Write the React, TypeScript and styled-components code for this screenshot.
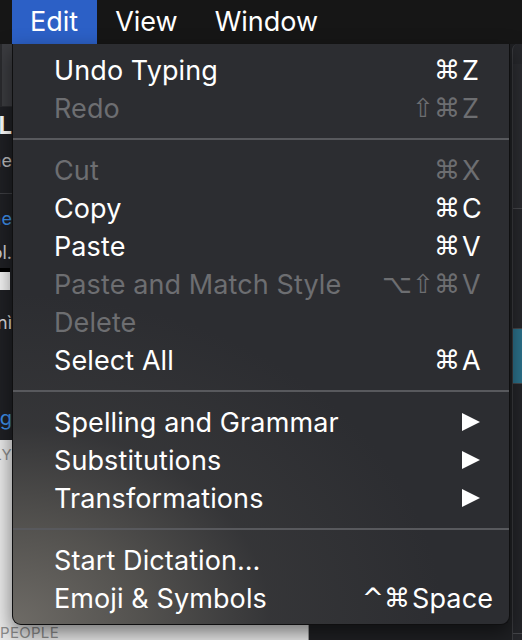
import React from "react";
import styled, { createGlobalStyle, css } from "styled-components";

const GlobalStyle = createGlobalStyle`
  html, body { margin: 0; padding: 0; background: #161616; }
  body { font-family: "Inter", "DejaVu Sans", sans-serif; -webkit-font-smoothing: antialiased; }
  * { box-sizing: border-box; }
`;

const Screen = styled.div`
  width: 522px;
  height: 640px;
  overflow: hidden;
  display: flex;
  flex-direction: column;
  background: #161616;
`;

const MenuBar = styled.div`
  height: 44px;
  flex: 0 0 44px;
  display: flex;
  align-items: stretch;
  padding-left: 12px;
  background: #161616;
`;

const MenuTitle = styled.div<{ $active?: boolean }>`
  display: flex;
  align-items: center;
  padding: 0 19px 2px 18px;
  font-size: 27px;
  color: #fff;
  ${(p) =>
    p.$active &&
    css`
      background: #2c60c6;
    `}
`;

const Desktop = styled.div`
  flex: 1;
  position: relative;
  display: flex;
`;

const LeftPane = styled.div`
  width: 309px;
  display: flex;
  flex-direction: column;
  border-right: 1px solid #9a9a9a;
`;

const DarkArea = styled.div`
  height: 396px;
  flex: 0 0 396px;
  display: flex;
  flex-direction: column;
  background: #1f2024;
`;

const Toolbar = styled.div`
  height: 63px;
  flex: 0 0 63px;
  background: #3b3c40;
  border-left: 2px solid #2a2b2e;
  border-bottom: 1px solid #2a2b2e;
`;

const Frag = styled.div<{ $h: number; $color: string; $bold?: boolean; $size?: number }>`
  width: 12px;
  height: ${(p) => p.$h}px;
  flex: 0 0 ${(p) => p.$h}px;
  display: flex;
  justify-content: flex-end;
  align-items: center;
  overflow: hidden;
  white-space: nowrap;
  color: ${(p) => p.$color};
  font-size: ${(p) => p.$size ?? 18}px;
  font-weight: ${(p) => (p.$bold ? 700 : 400)};
`;

const Rule = styled.div`
  height: 1px;
  flex: 0 0 1px;
  background: #3d3e42;
`;

const WhiteBox = styled.div`
  width: 10px;
  height: 22px;
  flex: 0 0 22px;
  background: #f2f2f2;
  border-top: 4px solid #000;
`;

const LightArea = styled.div`
  flex: 1;
  background: #e9e9e9;
  display: flex;
  flex-direction: column;
  justify-content: space-between;
  padding: 5px 0 0 0;
`;

const SmallLabel = styled.div`
  font-size: 15px;
  color: #8d8d8d;
  letter-spacing: 0.3px;
  height: 20px;
  line-height: 20px;
  overflow: hidden;
  white-space: nowrap;
`;

const LYLabel = styled(SmallLabel)`
  width: 12px;
  display: flex;
  justify-content: flex-end;
`;

const BottomLabel = styled(SmallLabel)`
  margin-bottom: -3px;
`;

const RightPane = styled.div`
  flex: 1;
  background: #1f2023;
  display: flex;
  justify-content: flex-end;
`;

const SideStrip = styled.div`
  width: 10px;
  display: flex;
  flex-direction: column;
  background: #26272b;
  border-left: 1px solid #3a3b3f;
  border-top-left-radius: 6px;
  padding-top: 20px;
`;

const StripBlock = styled.div<{ $h: number; $bg: string }>`
  height: ${(p) => p.$h}px;
  flex: 0 0 ${(p) => p.$h}px;
  background: ${(p) => p.$bg};
  border-bottom: 1px solid #45464a;
`;

const Dropdown = styled.div`
  position: absolute;
  top: 0;
  left: 12px;
  width: 498px;
  padding: 7px 0;
  border: 1px solid #0f0f10;
  border-top: none;
  border-radius: 0 0 9px 9px;
  background:
    radial-gradient(ellipse 430px 330px at 0% 100%, rgba(110,107,102,1) 0%, rgba(90,88,84,0.85) 30%, rgba(60,60,61,0.55) 60%, rgba(44,45,49,0) 100%),
    #2c2d31;
  box-shadow: 0 8px 20px rgba(0,0,0,0.5);
  z-index: 2;
`;

const Row = styled.div<{ $disabled?: boolean }>`
  height: 38px;
  display: flex;
  align-items: center;
  justify-content: space-between;
  padding: 0 25px 0 41px;
  font-size: 27px;
  letter-spacing: 0.1px;
  color: ${(p) => (p.$disabled ? "#6d6e71" : "#ffffff")};
  white-space: nowrap;
`;

const Label = styled.span``;

const Shortcut = styled.span`
  display: flex;
  align-items: center;
`;

const Mods = styled.span`
  font-family: "DejaVu Sans", sans-serif;
  font-size: 26px;
  margin-right: 2px;
`;

const Key = styled.span<{ $wide?: boolean }>`
  min-width: 22px;
  text-align: left;
  margin-right: ${(p) => (p.$wide ? -9 : 0)}px;
`;

const Separator = styled.div`
  height: 24px;
  display: flex;
  align-items: center;
  &::after {
    content: "";
    flex: 1;
    height: 2px;
    background: #58595d;
  }
`;

const Arrow = styled.svg`
  width: 18px;
  height: 18px;
  margin-right: 4px;
  fill: #fff;
`;

type Item = {
  label: string;
  disabled?: boolean;
  mods?: string;
  key?: string;
  wide?: boolean;
  submenu?: boolean;
};

const groups: Item[][] = [
  [
    { label: "Undo Typing", mods: "⌘", key: "Z" },
    { label: "Redo", disabled: true, mods: "⇧⌘", key: "Z" },
  ],
  [
    { label: "Cut", disabled: true, mods: "⌘", key: "X" },
    { label: "Copy", mods: "⌘", key: "C" },
    { label: "Paste", mods: "⌘", key: "V" },
    { label: "Paste and Match Style", disabled: true, mods: "⌥⇧⌘", key: "V" },
    { label: "Delete", disabled: true },
    { label: "Select All", mods: "⌘", key: "A" },
  ],
  [
    { label: "Spelling and Grammar", submenu: true },
    { label: "Substitutions", submenu: true },
    { label: "Transformations", submenu: true },
  ],
  [
    { label: "Start Dictation…" },
    { label: "Emoji & Symbols", mods: "^⌘", key: "Space", wide: true },
  ],
];

function MenuRow({ item }: { item: Item }) {
  return (
    <Row $disabled={item.disabled}>
      <Label>{item.label}</Label>
      {item.submenu ? (
        <Arrow viewBox="0 0 18 18">
          <polygon points="0,0 18,9 0,18" />
        </Arrow>
      ) : item.key ? (
        <Shortcut>
          <Mods>{item.mods}</Mods>
          <Key $wide={item.wide}>{item.key}</Key>
        </Shortcut>
      ) : null}
    </Row>
  );
}

export default function App() {
  return (
    <>
      <GlobalStyle />
      <Screen>
        <MenuBar>
          <MenuTitle $active>Edit</MenuTitle>
          <MenuTitle>View</MenuTitle>
          <MenuTitle>Window</MenuTitle>
        </MenuBar>
        <Desktop>
          <LeftPane>
            <DarkArea>
              <Toolbar />
              <Frag $h={36} $color="#ffffff" $bold $size={24}>L</Frag>
              <Frag $h={34} $color="#b9b9bb">Online</Frag>
              <Frag $h={16} $color="#b9b9bb" />
              <Rule />
              <Frag $h={48} $color="#3d8fe8">Online</Frag>
              <Frag $h={20} $color="#cfcfd1">Sol.</Frag>
              <Frag $h={6} $color="#1f2024" />
              <WhiteBox />
              <Frag $h={64} $color="#dcdcdc">Hanì</Frag>
              <Frag $h={44} $color="#1f2024" />
              <Frag $h={40} $color="#3d8fe8" $size={20}>Sing</Frag>
            </DarkArea>
            <LightArea>
              <LYLabel>ONLY</LYLabel>
              <BottomLabel>PEOPLE</BottomLabel>
            </LightArea>
          </LeftPane>
          <RightPane>
            <SideStrip>
              <StripBlock $h={145} $bg="#2a2b2f" />
              <StripBlock $h={120} $bg="#26272b" />
              <StripBlock $h={55} $bg="#2b6f88" />
              <StripBlock $h={250} $bg="#232428" />
            </SideStrip>
          </RightPane>
          <Dropdown>
            {groups.map((g, gi) => (
              <React.Fragment key={gi}>
                {gi > 0 && <Separator />}
                {g.map((item) => (
                  <MenuRow key={item.label} item={item} />
                ))}
              </React.Fragment>
            ))}
          </Dropdown>
        </Desktop>
      </Screen>
    </>
  );
}
